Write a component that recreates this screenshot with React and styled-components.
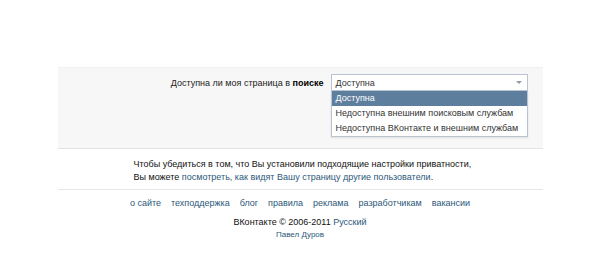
import React from "react";
import styled, { createGlobalStyle } from "styled-components";

const Global = createGlobalStyle`
  html, body { margin: 0; padding: 0; background: #fff; }
  body { font-family: Tahoma, "Liberation Sans", sans-serif; font-size: 9px; color: #000; }
`;

const Page = styled.div`
  width: 485px;
  margin: 0 auto;
  padding-top: 67px;
`;

const Panel = styled.div`
  background: #f7f7f7;
  border-top: 1px solid #f0f0f0;
  border-bottom: 1px solid #e3e3e3;
  height: 82px;
  box-sizing: border-box;
  padding-top: 6px;
`;

const Row = styled.div`
  display: flex;
  align-items: center;
  gap: 7px;
`;

const Label = styled.div`
  width: 266px;
  text-align: right;
  color: #222;
  b { color: #000; }
`;

const SelectWrap = styled.div`
  position: relative;
  width: 197px;
`;

const SelectBox = styled.div`
  height: 17px;
  box-sizing: border-box;
  border: 1px solid #b9c4d0;
  background: #fff;
  display: flex;
  align-items: center;
  padding: 0 4px;
  color: #333;
  position: relative;
`;

const Arrow = styled.span`
  position: absolute;
  right: 5px;
  top: 6px;
  width: 0;
  height: 0;
  border-left: 3px solid transparent;
  border-right: 3px solid transparent;
  border-top: 3px solid #8e9aa6;
`;

const Menu = styled.div`
  position: absolute;
  left: 0;
  right: 0;
  top: 17px;
  background: #fff;
  border: 1px solid #b9c4d0;
  border-top: none;
  box-shadow: 0 1px 2px rgba(0,0,0,0.1);
`;

const Item = styled.div`
  height: 15px;
  line-height: 15px;
  padding: 0 4px;
  color: ${p => (p.$active ? "#fff" : "#333")};
  background: ${p => (p.$active ? "#5e7e9e" : "transparent")};
  white-space: nowrap;
`;

const Note = styled.div`
  padding: 9px 0 0 76px;
  line-height: 13px;
  height: 40px;
  box-sizing: border-box;
  color: #111;
`;

const Link = styled.a`
  color: #2b587a;
  text-decoration: none;
`;

const Separator = styled.div`
  border-top: 1px solid #e6e6e6;
`;

const Footer = styled.div`
  padding-top: 7px;
  text-align: center;
`;

const FooterLinks = styled.div`
  display: flex;
  justify-content: center;
  gap: 10px;
  line-height: 13px;
`;

const Copy = styled.div`
  margin-top: 6px;
  line-height: 13px;
  color: #111;
`;

const Author = styled.div`
  font-size: 8px;
  line-height: 12px;
`;

export default function App() {
  return (
    <>
      <Global />
      <Page>
        <Panel>
          <Row>
            <Label>
              Доступна ли моя страница в <b>поиске</b>
            </Label>
            <SelectWrap>
              <SelectBox>
                Доступна
                <Arrow />
              </SelectBox>
              <Menu>
                <Item $active>Доступна</Item>
                <Item>Недоступна внешним поисковым службам</Item>
                <Item>Недоступна ВКонтакте и внешним службам</Item>
              </Menu>
            </SelectWrap>
          </Row>
        </Panel>
        <Note>
          Чтобы убедиться в том, что Вы установили подходящие настройки приватности,
          <br />
          Вы можете <Link href="#">посмотреть, как видят Вашу страницу другие пользователи</Link>.
        </Note>
        <Separator />
        <Footer>
          <FooterLinks>
            <Link href="#">о сайте</Link>
            <Link href="#">техподдержка</Link>
            <Link href="#">блог</Link>
            <Link href="#">правила</Link>
            <Link href="#">реклама</Link>
            <Link href="#">разработчикам</Link>
            <Link href="#">вакансии</Link>
          </FooterLinks>
          <Copy>
            ВКонтакте © 2006-2011 <Link href="#">Русский</Link>
          </Copy>
          <Author>
            <Link href="#">Павел Дуров</Link>
          </Author>
        </Footer>
      </Page>
    </>
  );
}
